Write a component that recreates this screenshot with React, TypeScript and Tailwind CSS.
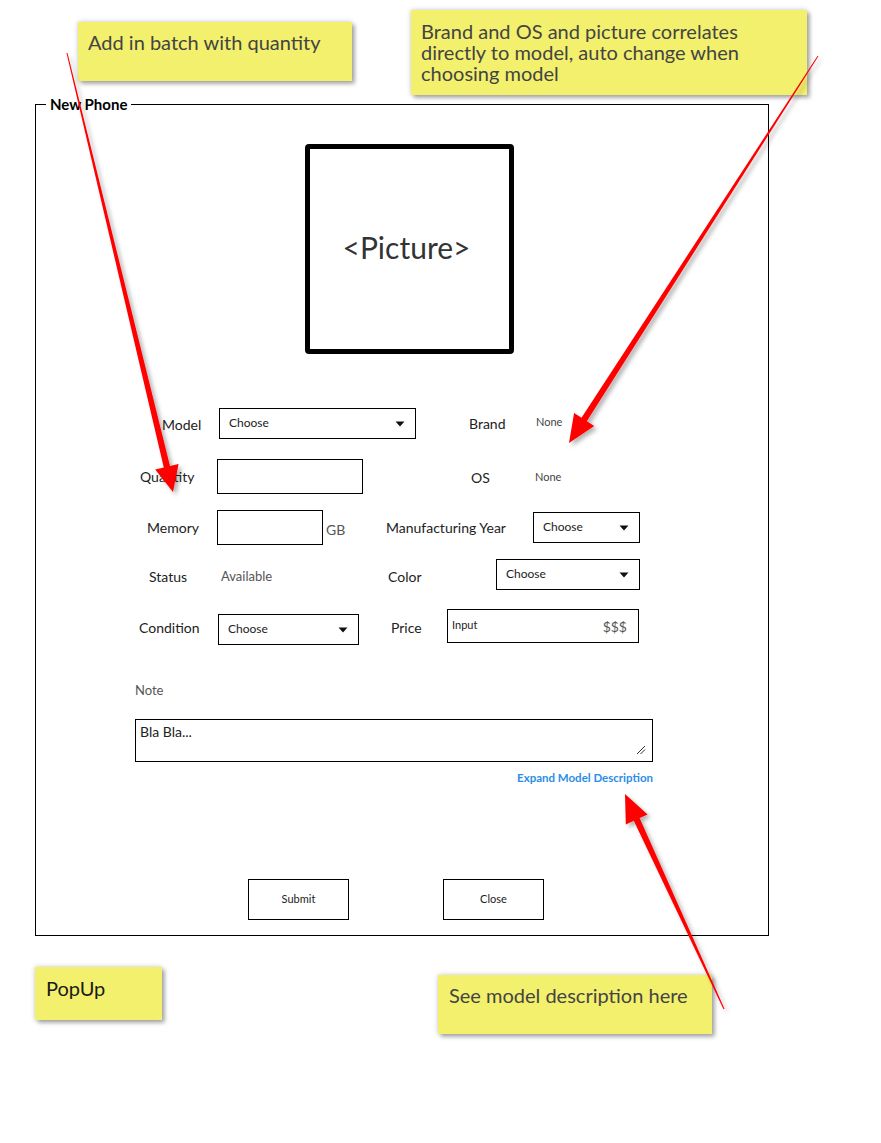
import React from "react";

type Arrow = { tx: number; ty: number; px: number; py: number; head: number; hw: number };

function arrowPoints(a: Arrow): string {
  const dx = a.px - a.tx;
  const dy = a.py - a.ty;
  const L = Math.sqrt(dx * dx + dy * dy);
  const ux = dx / L;
  const uy = dy / L;
  const nx = -uy;
  const ny = ux;
  const bx = a.px - ux * a.head;
  const by = a.py - uy * a.head;
  const sw = 3.2;
  const tw = 0.5;
  const pts: [number, number][] = [
    [a.tx + nx * tw, a.ty + ny * tw],
    [bx + nx * sw, by + ny * sw],
    [bx + nx * a.hw, by + ny * a.hw],
    [a.px, a.py],
    [bx - nx * a.hw, by - ny * a.hw],
    [bx - nx * sw, by - ny * sw],
    [a.tx - nx * tw, a.ty - ny * tw],
  ];
  return pts.map((p) => `${p[0].toFixed(1)},${p[1].toFixed(1)}`).join(" ");
}

const arrows: Arrow[] = [
  { tx: 67, ty: 53, px: 173, py: 492, head: 26, hw: 12 },
  { tx: 818, ty: 56, px: 569, py: 443, head: 28, hw: 12 },
  { tx: 724, ty: 1009, px: 625, py: 794, head: 28, hw: 12 },
];

function Caret() {
  return (
    <svg width="10" height="6" viewBox="0 0 10 6" className="shrink-0">
      <path d="M0.5 0.5 L9.5 0.5 L5 5.5 Z" fill="#111" />
    </svg>
  );
}

function Select({ w, h = "h-[31px]", label = "Choose", pl = "pl-[9px]", pr = "pr-[10px]" }: { w: string; h?: string; label?: string; pl?: string; pr?: string }) {
  return (
    <div className={`${w} ${h} ${pl} ${pr} shrink-0 border border-black bg-white flex items-center justify-between`}>
      <span className="text-[12px] text-[#222] leading-none -mt-[2px]">{label}</span>
      <Caret />
    </div>
  );
}

function Note({ className, children, textColor = "text-[#444]" }: { className: string; children: React.ReactNode; textColor?: string }) {
  return (
    <div
      className={`absolute bg-[#f2f06c] shadow-[0_0_5px_rgba(0,0,0,0.22),3px_3px_4px_rgba(0,0,0,0.28)] text-[20px] leading-[21px] ${textColor} ${className}`}
    >
      {children}
    </div>
  );
}

export default function App() {
  return (
    <div className="relative w-[881px] h-[1143px] bg-white overflow-hidden font-['Lato','Noto_Sans',sans-serif] text-[#222]">
      {/* Popup frame */}
      <div className="absolute left-[35px] top-[104px] w-[734px] h-[832px] border border-black">
        <div className="absolute left-[10px] -top-[10px] bg-white px-[4px] text-[15px] font-bold leading-[18px] text-black">
          New Phone
        </div>

        {/* picture */}
        <div className="ml-[269px] mt-[39px] w-[209px] h-[210px] border-[5px] border-black rounded-[4px] flex items-center justify-center pr-[6px]">
          <span className="text-[30px] text-[#333] -mt-[4px]">&lt;Picture&gt;</span>
        </div>

        {/* Row 1 */}
        <div className="flex items-center mt-[54px] h-[31px] text-[14px]">
          <div className="ml-[126px] w-[57px] pt-[2px]">Model</div>
          <Select w="w-[197px]" />
          <div className="ml-[53px] w-[67px]">Brand</div>
          <div className="text-[11px] text-[#444] -mt-[2px]">None</div>
        </div>

        {/* Row 2 */}
        <div className="flex items-center mt-[20px] h-[35px] text-[14px]">
          <div className="ml-[104px] w-[77px]">Quantity</div>
          <div className="w-[146px] h-[35px] border border-black shrink-0" />
          <div className="ml-[108px] w-[64px] pt-[2px]">OS</div>
          <div className="text-[11px] text-[#444] pt-[1px]">None</div>
        </div>

        {/* Row 3 */}
        <div className="flex items-center mt-[16px] h-[35px] text-[14px]">
          <div className="ml-[111px] w-[70px]">Memory</div>
          <div className="w-[106px] h-[35px] border border-black shrink-0" />
          <div className="ml-[3px] w-[60px] text-[14px] text-[#555] pt-[3px]">GB</div>
          <div className="w-[147px]">Manufacturing Year</div>
          <Select w="w-[107px]" />
        </div>

        {/* Row 4 */}
        <div className="flex items-center mt-[14px] h-[31px] text-[14px]">
          <div className="ml-[113px] w-[72px] pt-[4px]">Status</div>
          <div className="w-[167px] text-[13px] text-[#555] pt-[4px]">Available</div>
          <div className="w-[108px] pt-[3px]">Color</div>
          <Select w="w-[144px]" />
        </div>

        {/* Row 5 */}
        <div className="flex items-center mt-[19px] h-[36px] text-[14px]">
          <div className="ml-[103px] w-[79px]">Condition</div>
          <div className="mt-[5px]">
            <Select w="w-[141px]" />
          </div>
          <div className="ml-[32px] w-[56px]">Price</div>
          <div className="w-[192px] h-[34px] border border-black shrink-0 flex items-center justify-between pl-[4px] pr-[11px] -mt-[2px]">
            <span className="text-[11px] text-[#222] -mt-[2px]">Input</span>
            <span className="text-[14px] text-[#555]">$$$</span>
          </div>
        </div>

        {/* Note */}
        <div className="ml-[99px] mt-[37px] text-[13px] text-[#555] leading-[16px]">Note</div>
        <div className="relative ml-[99px] mt-[21px] w-[518px] h-[43px] border border-black pl-[4px] pt-[3px] text-[14px] text-[#222] leading-[18px]">
          Bla Bla...
          <svg className="absolute right-[6px] bottom-[6px]" width="10" height="10" viewBox="0 0 10 10">
            <path d="M1 9 L9 1 M4.5 9 L9 4.5" stroke="#333" strokeWidth="1" />
          </svg>
        </div>
        <div className="ml-[99px] w-[518px] mt-[9px] text-right text-[11.5px] font-bold text-[#2b8ee8] leading-[14px]">
          Expand Model Description
        </div>

        {/* Buttons */}
        <div className="flex mt-[94px]">
          <div className="ml-[212px] w-[101px] h-[41px] border border-black flex items-center justify-center text-[11px] text-[#222]">
            Submit
          </div>
          <div className="ml-[94px] w-[101px] h-[41px] border border-black flex items-center justify-center text-[11px] text-[#222]">
            Close
          </div>
        </div>
      </div>

      {/* Sticky notes */}
      <Note className="left-[78px] top-[22px] w-[274px] h-[59px] pl-[10px] pt-[10px]">Add in batch with quantity</Note>
      <Note className="left-[411px] top-[10px] w-[396px] h-[85px] pl-[10px] pt-[11px]">
        <div className="h-[21px]">Brand and OS and picture correlates</div>
        <div className="h-[21px]">directly to model, auto change when</div>
        <div className="h-[21px]">choosing model</div>
      </Note>
      <Note className="left-[35px] top-[967px] w-[127px] h-[53px] pl-[11px] pt-[11px]" textColor="text-[#1a1a1a]">
        PopUp
      </Note>
      <Note className="left-[438px] top-[975px] w-[274px] h-[59px] pl-[11px] pt-[10px]">See model description here</Note>

      {/* Arrows */}
      <svg className="absolute inset-0 pointer-events-none" width="881" height="1143" viewBox="0 0 881 1143">
        <defs>
          <filter id="ash" x="-20%" y="-20%" width="140%" height="140%">
            <feDropShadow dx="3" dy="3" stdDeviation="2" floodColor="#000" floodOpacity="0.3" />
          </filter>
        </defs>
        {arrows.map((a, i) => (
          <polygon key={i} points={arrowPoints(a)} fill="#ff0000" filter="url(#ash)" />
        ))}
      </svg>
    </div>
  );
}
